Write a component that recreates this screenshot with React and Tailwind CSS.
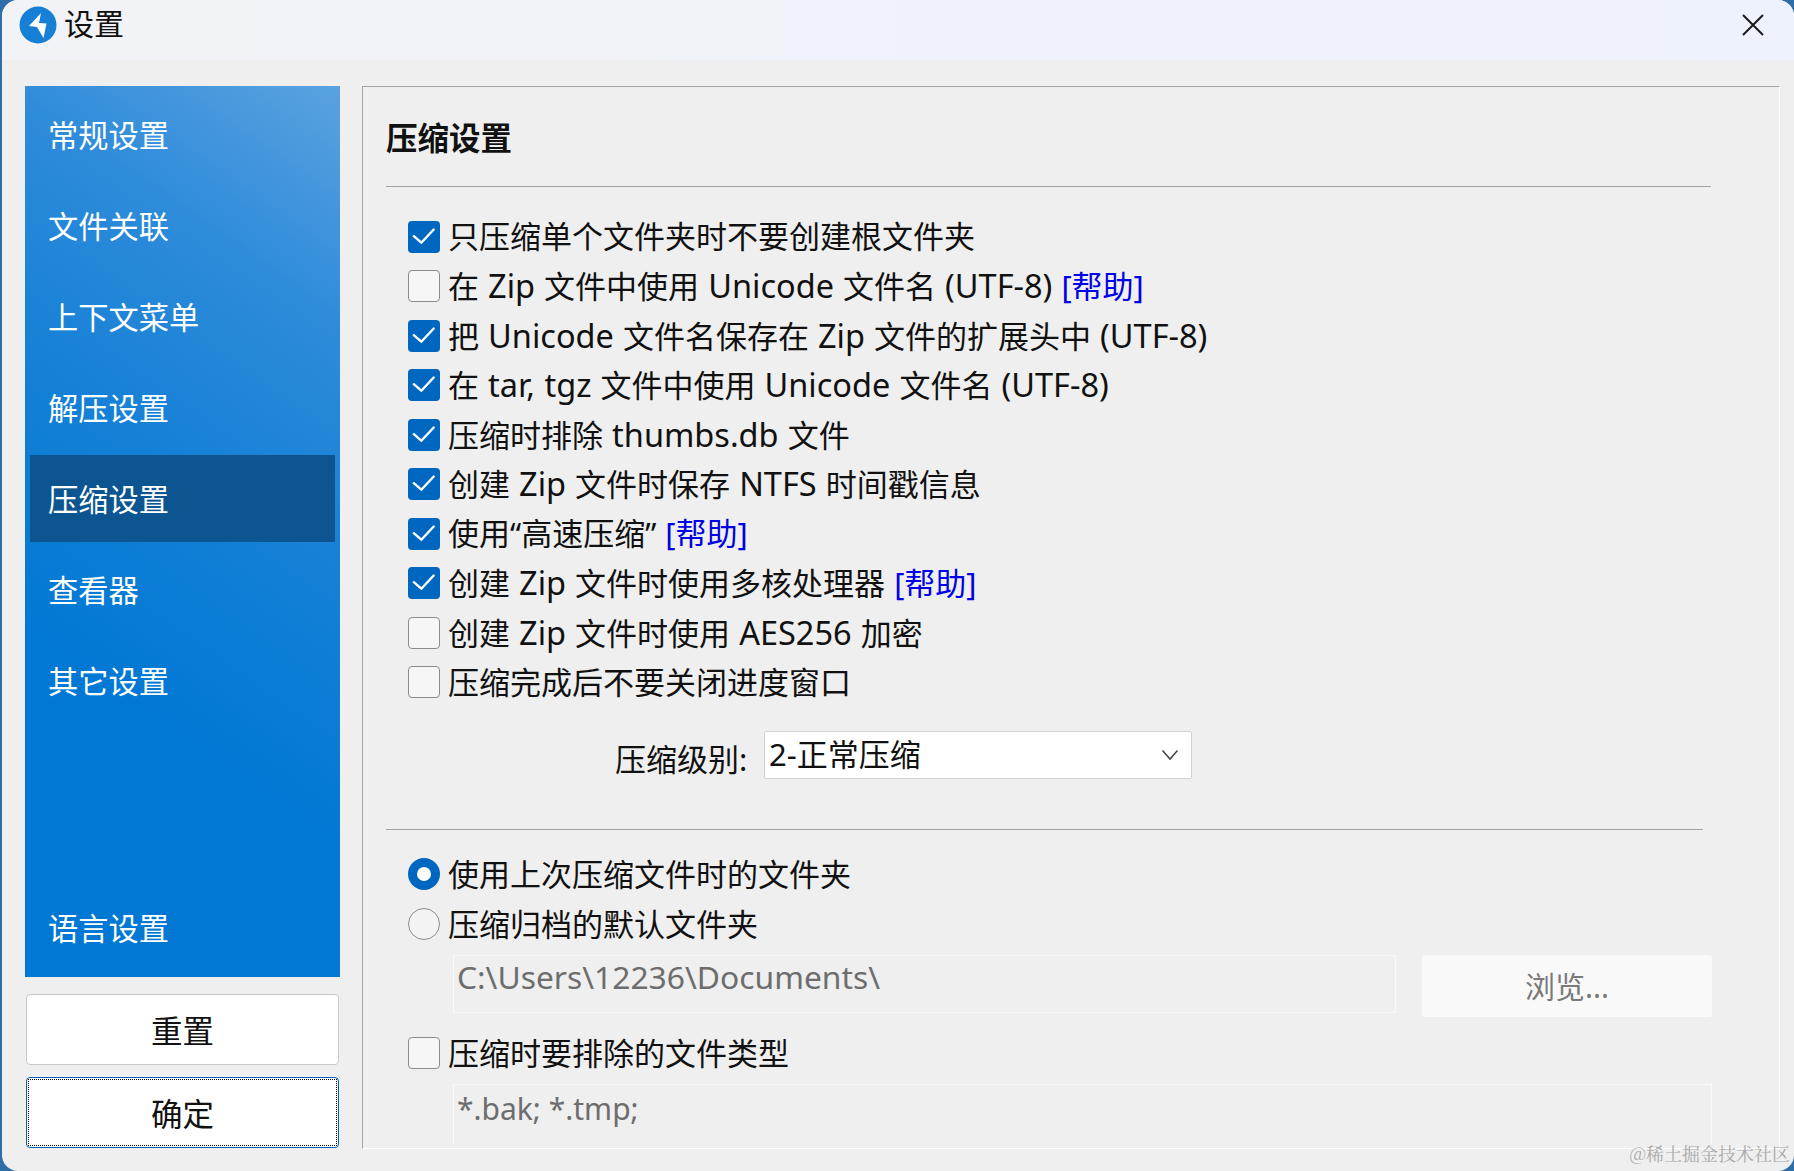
import React from "react";

const font = { fontFamily: '"Noto Sans", "Noto Sans CJK SC", sans-serif' };

function T({ children }) {
  const parts = String(children).split(/([\x21-\x7e][\x20-\x7e]*[\x21-\x7e]|[\x21-\x7e])/);
  return parts.map((p, i) =>
    i % 2 ? (
      <span key={i} className="text-[32.5px]">
        {p}
      </span>
    ) : (
      p
    )
  );
}

function Check({ on }) {
  return on ? (
    <span className="w-8 h-8 shrink-0 rounded-[4px] bg-[#0067c0] flex items-center justify-center">
      <svg width="32" height="32" viewBox="0 0 32 32" fill="none">
        <path d="M5.8 15.2 L13.3 21.7 L25.7 8.5" stroke="#fff" strokeWidth="2.4" strokeLinecap="round" strokeLinejoin="round" />
      </svg>
    </span>
  ) : (
    <span className="w-8 h-8 shrink-0 rounded-[4px] border-[1.5px] border-[#8c8c8c] bg-[#f6f6f6]" />
  );
}

function Row({ on, text, help }) {
  return (
    <div className="h-[49.5px] flex items-center">
      <Check on={on} />
      <span className="ml-[8px] whitespace-pre leading-none [word-spacing:1px]">
        <T>{text}</T>
        {help && <span className="text-[#0000e6]"> [帮助]</span>}
      </span>
    </div>
  );
}

function Radio({ on, text }) {
  return (
    <div className="h-[50px] flex items-center">
      {on ? (
        <span className="w-8 h-8 shrink-0 rounded-full bg-[#0067c0] flex items-center justify-center">
          <span className="w-[14px] h-[14px] rounded-full bg-white" />
        </span>
      ) : (
        <span className="w-8 h-8 shrink-0 rounded-full border-[1.5px] border-[#8c8c8c] bg-[#f3f3f3]" />
      )}
      <span className="ml-[8px] leading-none">{text}</span>
    </div>
  );
}

const nav = ["常规设置", "文件关联", "上下文菜单", "解压设置", "压缩设置", "查看器", "其它设置"];
const rows = [
  [true, "只压缩单个文件夹时不要创建根文件夹"],
  [false, "在 Zip 文件中使用 Unicode 文件名 (UTF-8)", true],
  [true, "把 Unicode 文件名保存在 Zip 文件的扩展头中 (UTF-8)"],
  [true, "在 tar, tgz 文件中使用 Unicode 文件名 (UTF-8)"],
  [true, "压缩时排除 thumbs.db 文件"],
  [true, "创建 Zip 文件时保存 NTFS 时间戳信息"],
  [true, "使用“高速压缩”", true],
  [true, "创建 Zip 文件时使用多核处理器", true],
  [false, "创建 Zip 文件时使用 AES256 加密"],
  [false, "压缩完成后不要关闭进度窗口"],
];

export default function App() {
  return (
    <div className="w-[1794px] h-[1171px] bg-[#2f6ea8] overflow-hidden" style={font}>
      <div className="relative ml-[2px] h-full rounded-[16px] overflow-hidden bg-[#efefef] text-[31px] text-[#111] flex flex-col">
        <header className="h-[60px] shrink-0 bg-gradient-to-r from-[#f2f3f7] to-[#eef2fc] flex items-center pl-[17px] pr-[30px] pb-[10px]">
          <svg width="38" height="38" viewBox="0 0 38 38">
            <circle cx="19" cy="19" r="18.5" fill="#1780d6" />
            <path d="M22 7 L10 20 L18 21 L24.5 32 L27.5 17.5 L20 17 Z" fill="#fff" />
          </svg>
          <span className="ml-[7px] text-[30px] leading-none -mt-[2px]">设置</span>
          <svg className="ml-auto" width="22" height="22" viewBox="0 0 22 22" fill="none">
            <path d="M1 1 L21 21 M21 1 L1 21" stroke="#1a1a1a" strokeWidth="2" />
          </svg>
        </header>

        <div className="flex-1 min-h-0 flex pt-[26px] pl-[23px] pr-[14px] pb-[22px]">
          <aside className="w-[315px] shrink-0 flex flex-col">
            <nav className="h-[891px] bg-[linear-gradient(215deg,#5aa2e0_0%,#2e8bda_22%,#1480d6_45%,#0078d4_70%)] text-white text-[30.25px] pl-[5px] pr-[5px] pt-[5px] flex flex-col relative">
              {nav.map((n, i) => (
                <div
                  key={n}
                  className={
                    "h-[87px] mb-[4px] flex items-center pl-[18px] pt-[3px] leading-none " +
                    (i === 4 ? "bg-[#0c5590]" : "")
                  }
                >
                  {n}
                </div>
              ))}
              <div className="mt-auto h-[87px] mb-[5px] flex items-center pl-[18px] pt-[2px] leading-none">语言设置</div>
            </nav>
            <button className="mt-[17px] mx-[1px] h-[71px] rounded-[4px] bg-white border border-[#c9c9c9] text-[31.5px] text-[#111] leading-none pt-[2px]">
              重置
            </button>
            <button className="mt-[12px] mx-[1px] h-[71px] rounded-[4px] bg-white border border-[#005fb8] text-[31.5px] text-[#111] leading-none p-[1px]">
              <span className="w-full h-full flex items-center justify-center border border-dotted border-black pt-[2px]">确定</span>
            </button>
          </aside>

          <main className="ml-[22px] flex-1 min-w-0 border border-t-[1.5px] border-l-[1.5px] border-[#a3a3a3] border-r-white border-b-white pl-[23px] pt-[26px]">
            <h2 className="text-[31.5px] font-bold leading-none h-[74px] w-[1325px] border-b-[1.5px] border-[#a3a3a3] pb-[23px] flex items-center">
              压缩设置
            </h2>
            <div className="pl-[22px] pt-[25px]">
              {rows.map(([on, text, help]) => (
                <Row key={text} on={on} text={text} help={help} />
              ))}
              <div className="mt-[23px] h-[49px] flex items-center pl-[207px]">
                <span className="w-[132px] whitespace-nowrap leading-none mt-[10px]">压缩级别:</span>
                <div className="ml-[17px] w-[428px] h-[48px] bg-white border border-[#d2d2d2] rounded-[2px] flex items-center pl-[4px] pr-[12px]">
                  <span className="leading-none">2-正常压缩</span>
                  <svg className="ml-auto" width="18" height="12" viewBox="0 0 18 12" fill="none">
                    <path d="M1.5 1.5 L9 10 L16.5 1.5" stroke="#444" strokeWidth="1.5" />
                  </svg>
                </div>
              </div>
            </div>
            <div className="mt-[50px] w-[1317px] border-t-[1.5px] border-[#a3a3a3]" />
            <div className="pl-[22px] pt-[19px]">
              <Radio on text="使用上次压缩文件时的文件夹" />
              <Radio text="压缩归档的默认文件夹" />
              <div className="flex items-start ml-[45px] mt-[6px]">
                <div className="w-[943px] h-[58px] border border-[#f9f9f9] pl-[3px] pb-[15px] flex items-center text-[31.8px] text-[#6d6d6d] leading-none">
                  C:\Users\12236\Documents\
                </div>
                <button className="ml-[26px] w-[290px] h-[62px] rounded-[3px] bg-[#f9f9f9] text-[30px] text-[#7a7a7a] leading-none pt-[2px]">
                  浏览...
                </button>
              </div>
              <div className="mt-[11px] h-[50px] flex items-center">
                <Check on={false} />
                <span className="ml-[8px] leading-none">压缩时要排除的文件类型</span>
              </div>
              <div className="ml-[45px] mt-[6px] w-[1259px] h-[60px] border border-[#f9f9f9] border-b-0 pl-[3px] pb-[11px] flex items-center text-[30px] text-[#6d6d6d] leading-none">
                *.bak; *.tmp;
              </div>
            </div>
          </main>
        </div>
        <span className="absolute right-[4px] bottom-[9px] text-[18px] leading-none text-[#a9a9a9]" style={{ fontFamily: '"Noto Serif CJK SC", "Noto Sans CJK SC", serif' }}>
          @稀土掘金技术社区
        </span>
      </div>
    </div>
  );
}
